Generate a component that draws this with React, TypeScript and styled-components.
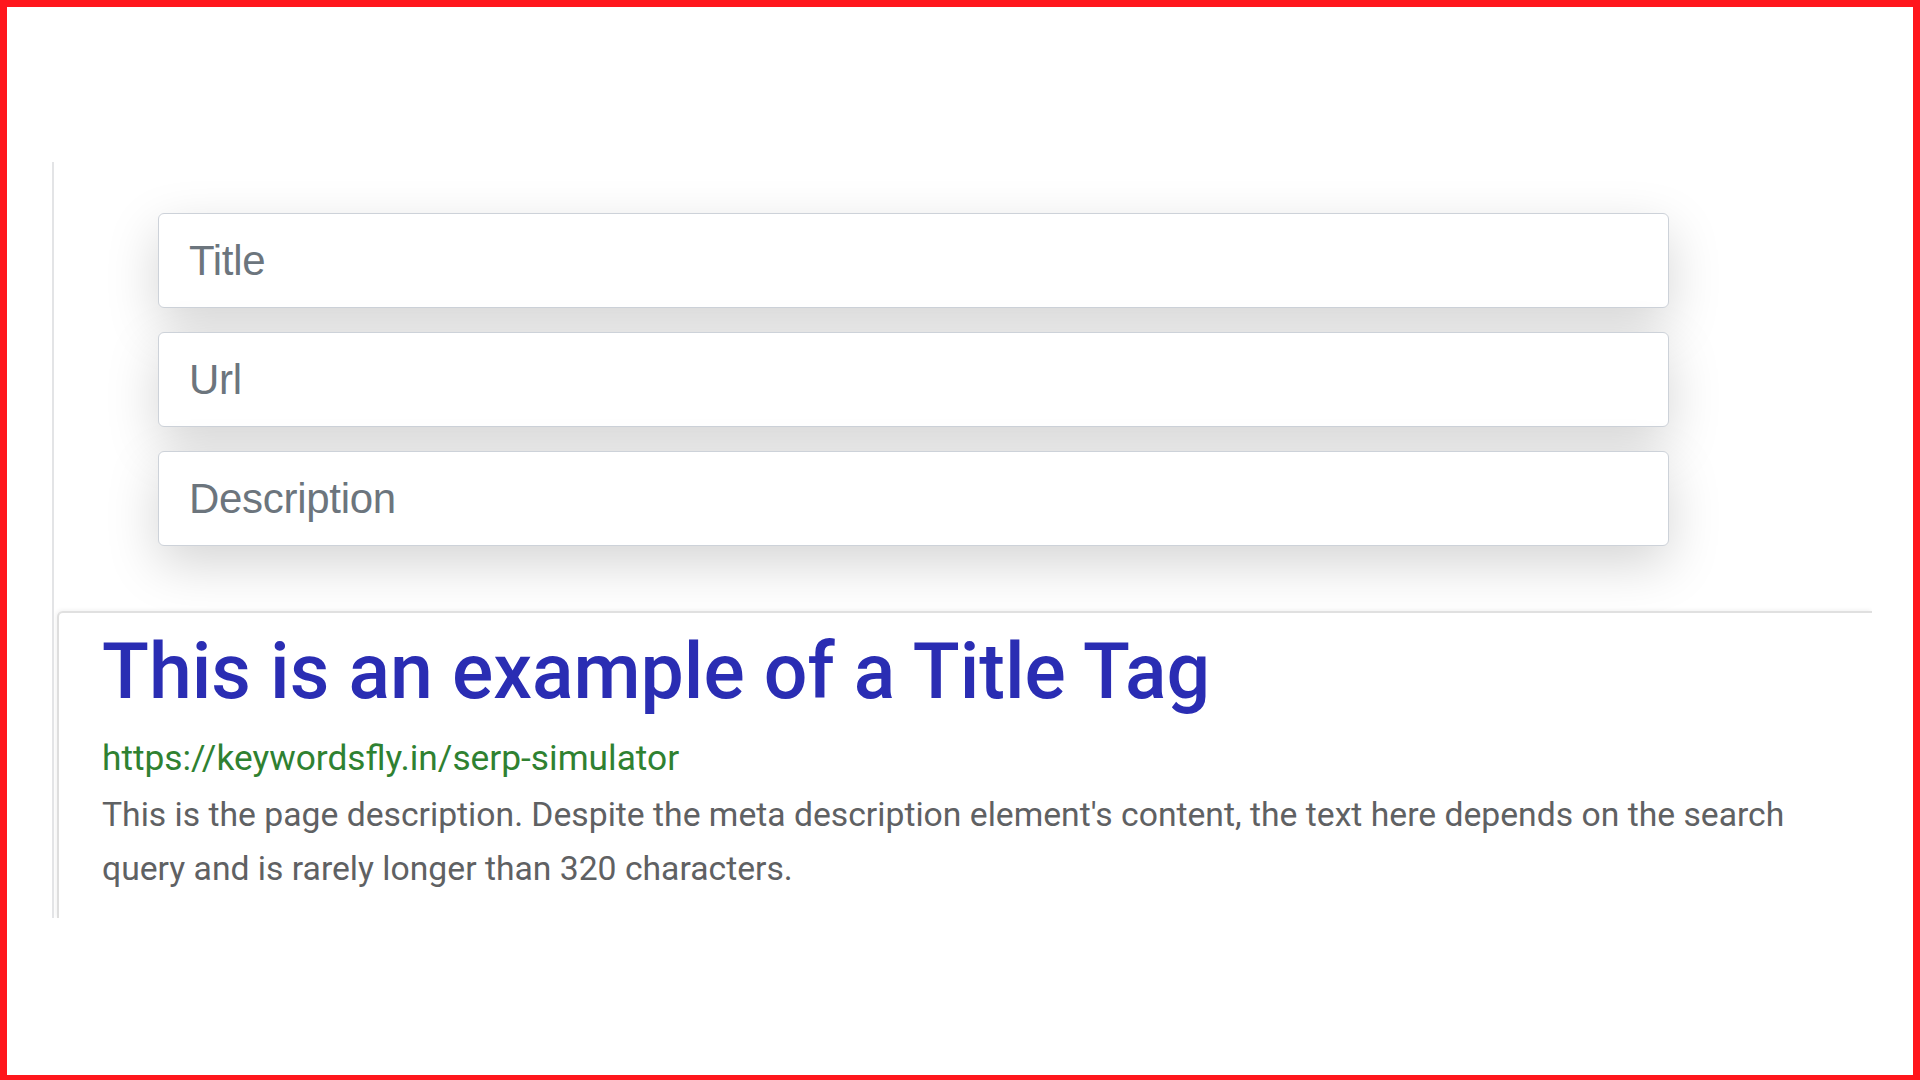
import React from "react";
import styled, { createGlobalStyle } from "styled-components";

const GlobalStyle = createGlobalStyle`
  html, body {
    margin: 0;
    padding: 0;
    background: #ffffff;
  }
  * { box-sizing: border-box; }
`;

const Frame = styled.div`
  width: 100vw;
  height: 100vh;
  border-style: solid;
  border-color: #ff161c;
  border-width: 7px 7px 5px 7px;
  background: #ffffff;
  overflow: hidden;
`;

const Panel = styled.section`
  margin: 155px 0 0 45px;
  width: 1820px;
  height: 756px;
  border-left: 2px solid #e3e4e6;
  overflow: hidden;
  display: flex;
  flex-direction: column;
`;

const Form = styled.div`
  display: flex;
  flex-direction: column;
  gap: 24px;
  padding: 51px 0 0 104px;
`;

const Field = styled.input`
  width: 1511px;
  height: 95px;
  border: 1.5px solid #cdd2d9;
  border-radius: 6px;
  background: #ffffff;
  padding: 0 30px;
  font-family: "Liberation Sans", Arial, sans-serif;
  font-size: 42px;
  letter-spacing: -0.3px;
  color: #495057;
  box-shadow: 0 18px 52px rgba(0, 0, 0, 0.17);
  outline: none;
  &::placeholder {
    color: #6c757d;
  }
`;

const ResultCard = styled.article`
  margin: 65px 0 0 3px;
  width: 1815px;
  flex: 1;
  border-top: 2px solid #e0e0e0;
  border-left: 2px solid #dedede;
  border-top-left-radius: 6px;
  box-shadow: -1px -1px 4px rgba(0, 0, 0, 0.06);
  padding: 14px 0 0 43px;
  background: #ffffff;
`;

const Heading = styled.h1`
  margin: 0;
  font-family: Roboto, "Liberation Sans", sans-serif;
  font-weight: 500;
  font-size: 77px;
  line-height: 90px;
  color: #2a2db3;
`;

const Link = styled.div`
  margin-top: 19px;
  font-family: Roboto, "Liberation Sans", sans-serif;
  font-size: 35.3px;
  line-height: 44px;
  color: #2f8131;
`;

const Snippet = styled.p`
  margin: 8px 0 0 0;
  max-width: 1700px;
  font-family: Roboto, "Liberation Sans", sans-serif;
  font-size: 33.7px;
  line-height: 54px;
  color: #5f6163;
`;

export default function App() {
  return (
    <>
      <GlobalStyle />
      <Frame>
        <Panel>
          <Form>
            <Field placeholder="Title" />
            <Field placeholder="Url" />
            <Field placeholder="Description" />
          </Form>
          <ResultCard>
            <Heading>This is an example of a Title Tag</Heading>
            <Link>https://keywordsfly.in/serp-simulator</Link>
            <Snippet>
              This is the page description. Despite the meta description
              element's content, the text here depends on the search query and
              is rarely longer than 320 characters.
            </Snippet>
          </ResultCard>
        </Panel>
      </Frame>
    </>
  );
}
